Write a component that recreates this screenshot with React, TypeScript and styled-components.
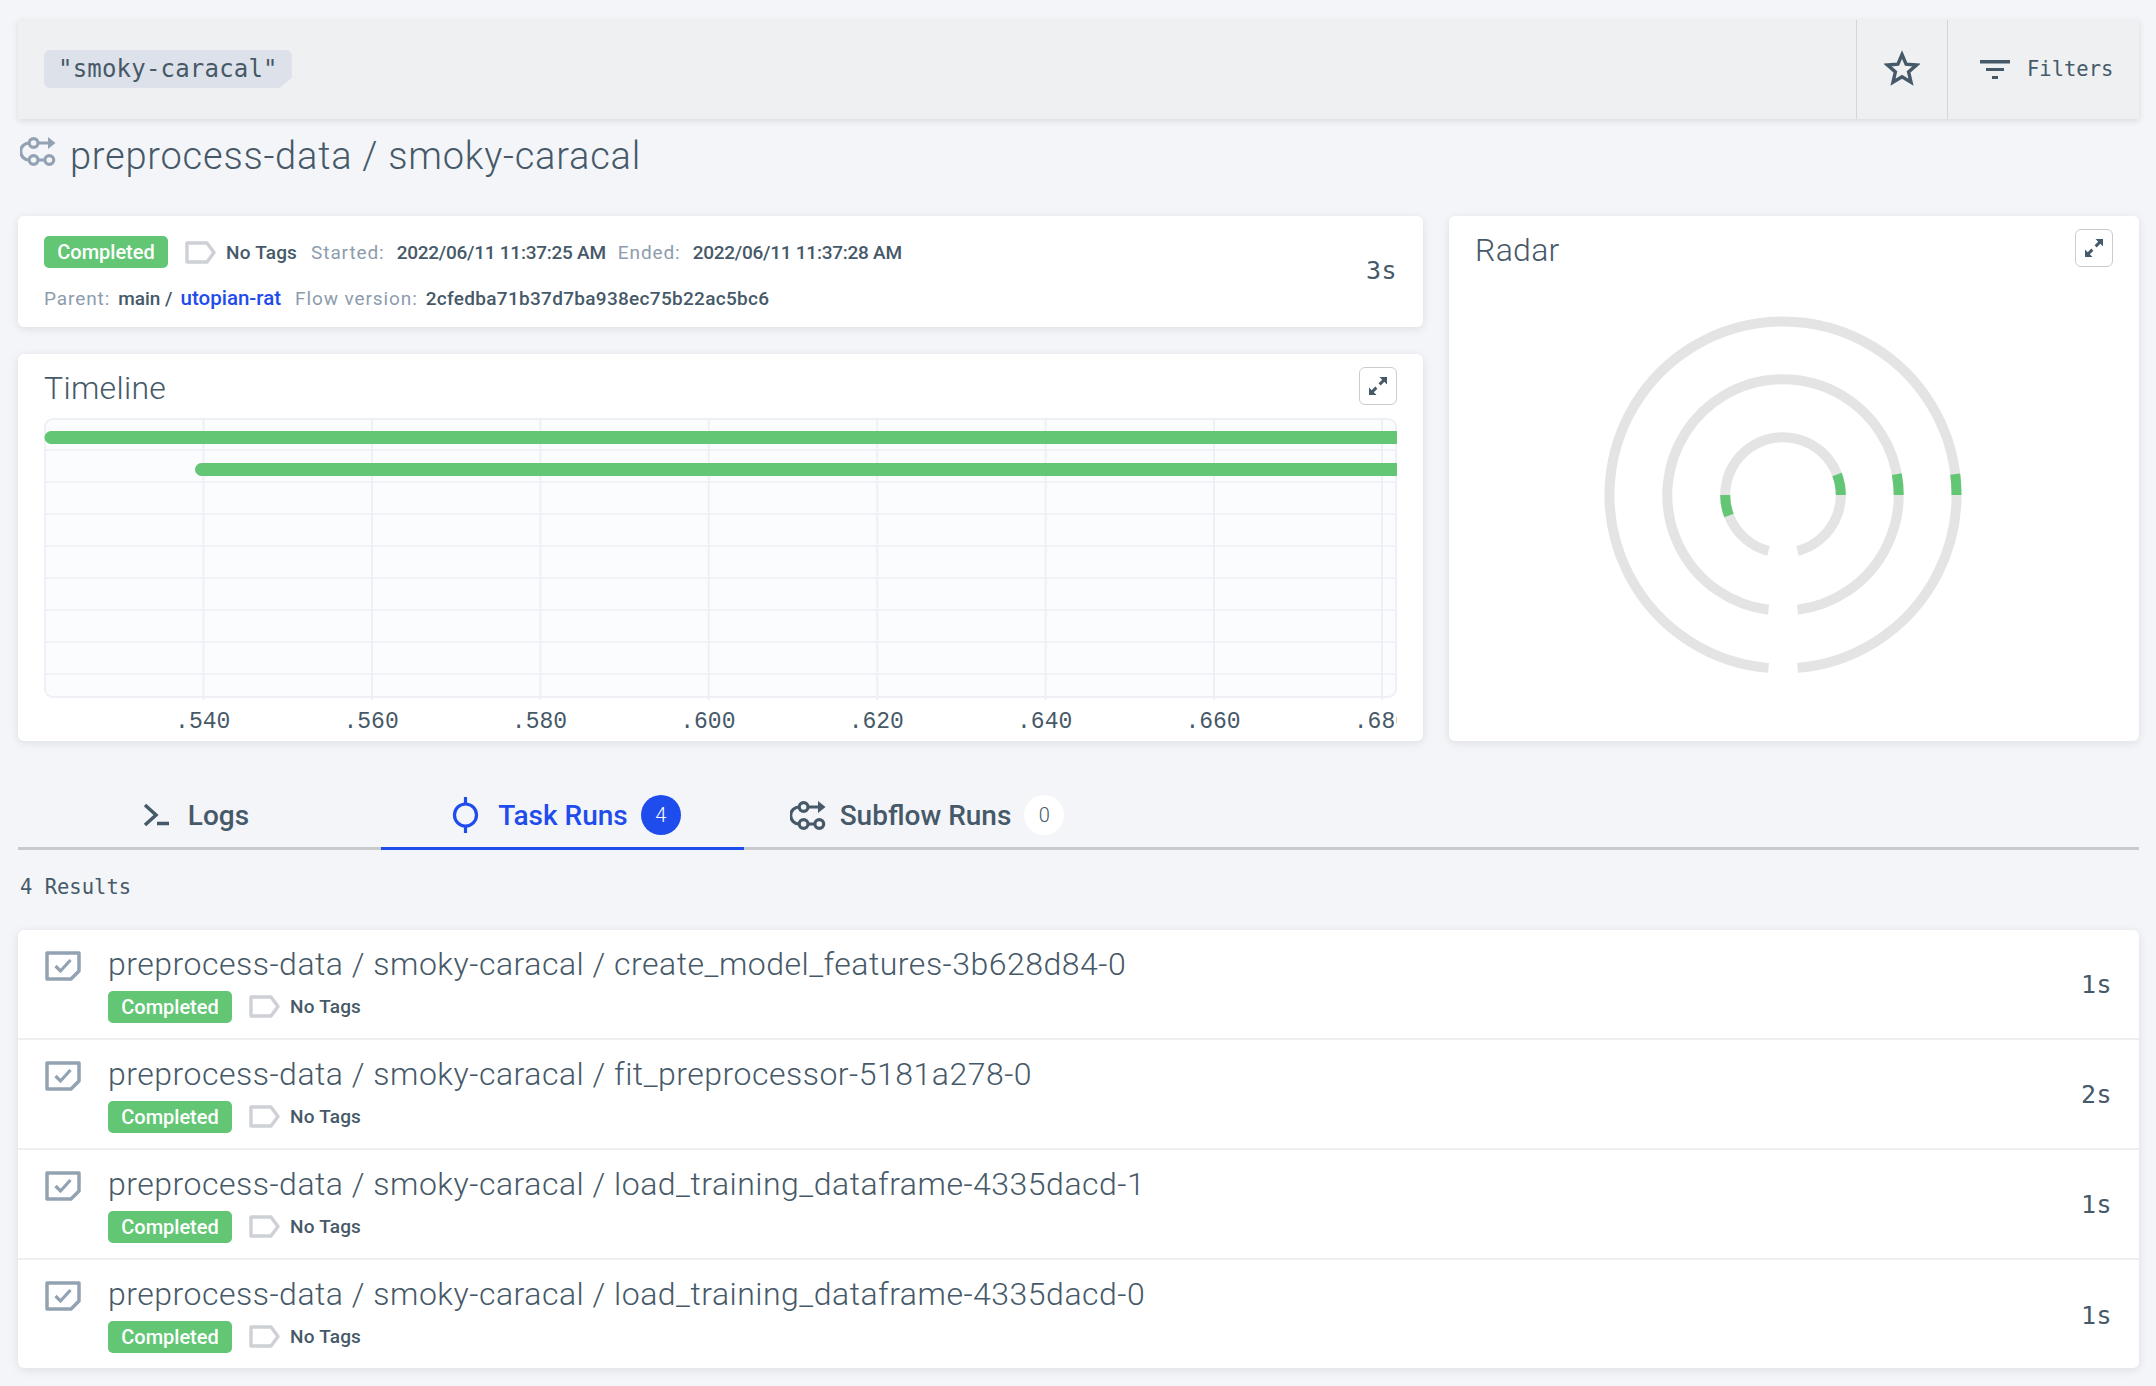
import { FC } from 'react';
import styled, { createGlobalStyle } from 'styled-components';

const GlobalStyle = createGlobalStyle`
  html, body {
    margin: 0;
    padding: 0;
    background: #f4f5f8;
    color: #465968;
    font-family: Roboto, "Liberation Sans", sans-serif;
  }
  * { box-sizing: border-box; }
`;

const TEXT = '#465968';
const GREEN = '#62c674';
const BLUE = '#1f4ced';
const MONO = '"DejaVu Sans Mono", monospace';

const TASK_RUNS = [
  { name: 'create_model_features-3b628d84-0', duration: '1s' },
  { name: 'fit_preprocessor-5181a278-0', duration: '2s' },
  { name: 'load_training_dataframe-4335dacd-1', duration: '1s' },
  { name: 'load_training_dataframe-4335dacd-0', duration: '1s' },
];

const TICKS = ['.540', '.560', '.580', '.600', '.620', '.640', '.660', '.680'];

const FlowIcon: FC<{ color: string }> = ({ color }) => (
  <svg width="36" height="29" viewBox="0 0 36 29" fill="none" stroke={color} strokeWidth="3.2">
    <circle cx="13.6" cy="6" r="4.4" />
    <circle cx="13.6" cy="23" r="4.4" />
    <circle cx="29.3" cy="23" r="4.4" />
    <path d="M18 6h11M18 23h7M9.2 6A8.5 8.5 0 0 0 9.2 23" />
    <path d="M28 0l7.5 6-7.5 6z" fill={color} stroke="none" />
  </svg>
);

const TerminalIcon: FC = () => (
  <svg width="27" height="24" viewBox="0 0 27 24" fill="none" stroke={TEXT} strokeWidth="3.5">
    <path d="M2 2l11 10L2 22M14 20.5h12" />
  </svg>
);

const TaskIcon: FC = () => (
  <svg width="27" height="36" viewBox="0 0 27 36" fill="none" stroke={BLUE} strokeWidth="3.2">
    <circle cx="13.5" cy="18" r="11" />
    <path d="M13.5 0v7M13.5 29v7" />
  </svg>
);

const StarIcon: FC = () => (
  <svg width="36" height="36" viewBox="0 0 36 36" fill="none" stroke={TEXT} strokeWidth="3.4">
    <path d="M18 4.5l4.1 9.6 10.4.9-7.9 6.9 2.4 10.2L18 26.7l-9 5.4 2.4-10.2-7.9-6.9 10.4-.9z" />
  </svg>
);

const FilterIcon: FC = () => (
  <svg width="30" height="20" viewBox="0 0 30 20" fill={TEXT}>
    <rect x="0" y="0" width="30" height="3.5" />
    <rect x="6" y="8" width="18" height="3" />
    <rect x="12" y="16" width="6" height="3" />
  </svg>
);

const ExpandIcon: FC = () => (
  <svg width="20" height="20" viewBox="0 0 20 20" fill={TEXT}>
    <path d="M11.5 1H19v7.5l-2.7-2.7-3.6 3.6-2.1-2.1 3.6-3.6zM8.5 19H1v-7.5l2.7 2.7 3.6-3.6 2.1 2.1-3.6 3.6z" />
  </svg>
);

const TagIcon: FC = () => (
  <svg width="31" height="23" viewBox="0 0 31 23" fill="none" stroke="#cdd0d5" strokeWidth="3.4" strokeLinejoin="round">
    <path d="M2 2h20l7 9.5-7 9.5H2z" />
  </svg>
);

const CheckIcon: FC = () => (
  <svg width="36" height="30" viewBox="0 0 36 30" fill="none" stroke="#93a2b3">
    <path d="M2 2h32v18l-8 8H2z" strokeWidth="3.5" strokeLinejoin="round" />
    <path d="M10.5 15l5 5 10-11" strokeWidth="3.2" />
  </svg>
);

// one ring of the radar, open at the bottom, with an arc helper for the green marks
const polar = (r: number, deg: number) => {
  const a = (deg * Math.PI) / 180;
  return `${(190 + r * Math.cos(a)).toFixed(2)} ${(190 - r * Math.sin(a)).toFixed(2)}`;
};
const arc = (r: number, from: number, to: number) =>
  `M${polar(r, from)}A${r} ${r} 0 ${to - from > 180 ? 1 : 0} 0 ${polar(r, to)}`;

const RING_RADII = [173.5, 115.7, 57.8];

const RadarChart: FC = () => (
  <svg width="380" height="380" viewBox="0 0 380 380" fill="none" strokeWidth="10">
    {RING_RADII.map((r) => {
      const gap = (Math.asin(14.5 / r) * 180) / Math.PI;
      return <path key={r} d={arc(r, -90 + gap, 270 - gap)} stroke="#e4e4e4" />;
    })}
    {RING_RADII.map((r) => (
      <path key={r} d={arc(r, 0, (21 / r) * (180 / Math.PI))} stroke={GREEN} />
    ))}
    <path d={arc(57.8, 180, 180 + (21 / 57.8) * (180 / Math.PI))} stroke={GREEN} />
  </svg>
);

const TimelinePlot: FC = () => {
  const rows = [32, 64, 96, 128, 160, 192, 224, 256];
  const cols = [159.5, 328, 496.4, 664.8, 833.2, 1001.6, 1170, 1338];
  return (
    <PlotSvg width="1353" height="282" viewBox="0 0 1353 282" fill="none">
      <rect x="1" y="1" width="1351" height="278" rx="8" fill="#fbfcfe" stroke="#eff0f5" strokeWidth="2" />
      {rows.map((y) => (
        <path key={y} d={`M1 ${y}H1352`} stroke="#f1f2f7" strokeWidth="2" />
      ))}
      {cols.map((x) => (
        <path key={x} d={`M${x} 1V282`} stroke="#eff0f5" strokeWidth="2" />
      ))}
      <path d="M7 13h1346v13H7a6.5 6.5 0 0 1 0-13z" fill={GREEN} />
      <path d="M157.5 45h1195.5v13H157.5a6.5 6.5 0 0 1 0-13z" fill={GREEN} />
    </PlotSvg>
  );
};

const App: FC = () => (
  <>
    <GlobalStyle />
    <Page>
      <FilterBar>
        <SearchArea>
          <QueryChip>"smoky-caracal"</QueryChip>
        </SearchArea>
        <StarCell>
          <StarIcon />
        </StarCell>
        <FiltersCell>
          <FilterIcon />
          <FiltersLabel>Filters</FiltersLabel>
        </FiltersCell>
      </FilterBar>

      <Heading>
        <FlowIcon color="#93a2b3" />
        <HeadingText>preprocess-data / smoky-caracal</HeadingText>
      </Heading>

      <Panels>
        <LeftColumn>
          <InfoCard>
            <InfoLines>
              <InfoLine>
                <StateBadge>Completed</StateBadge>
                <TagIcon />
                <TagLabel>No Tags</TagLabel>
                <MetaLabel>Started:</MetaLabel>
                <DateValue>2022/06/11 11:37:25 AM</DateValue>
                <MetaLabel>Ended:</MetaLabel>
                <DateValue>2022/06/11 11:37:28 AM</DateValue>
              </InfoLine>
              <InfoLine>
                <MetaLabel>Parent:</MetaLabel>
                <MetaValue>main /</MetaValue>
                <ParentLink>utopian-rat</ParentLink>
                <MetaLabel>Flow version:</MetaLabel>
                <HashValue>2cfedba71b37d7ba938ec75b22ac5bc6</HashValue>
              </InfoLine>
            </InfoLines>
            <CardDuration>3s</CardDuration>
          </InfoCard>

          <TimelineCard>
            <CardHeader>
              <CardTitle>Timeline</CardTitle>
              <ExpandButton>
                <ExpandIcon />
              </ExpandButton>
            </CardHeader>
            <TimelinePlot />
            <TickRow>
              {TICKS.map((t) => (
                <Tick key={t}>{t}</Tick>
              ))}
            </TickRow>
          </TimelineCard>
        </LeftColumn>

        <RadarCard>
          <CardHeader>
            <CardTitle>Radar</CardTitle>
            <ExpandButton>
              <ExpandIcon />
            </ExpandButton>
          </CardHeader>
          <RadarWrap>
            <RadarChart />
          </RadarWrap>
        </RadarCard>
      </Panels>

      <Tabs>
        <Tab $shift={-7}>
          <TerminalIcon />
          <TabLabel $indent={5}>Logs</TabLabel>
        </Tab>
        <Tab $active $shift={8}>
          <TaskIcon />
          <TabLabel $active $indent={6}>Task Runs</TabLabel>
          <CountBadge $active>4</CountBadge>
        </Tab>
        <Tab $shift={3}>
          <FlowIcon color={TEXT} />
          <TabLabel $indent={1}>Subflow Runs</TabLabel>
          <CountBadge>0</CountBadge>
        </Tab>
      </Tabs>

      <ResultCount>4 Results</ResultCount>

      <RunList>
        {TASK_RUNS.map((run) => (
          <RunRow key={run.name}>
            <CheckIcon />
            <RunBody>
              <RunTitle>preprocess-data / smoky-caracal / {run.name}</RunTitle>
              <RunMeta>
                <StateBadge>Completed</StateBadge>
                <TagIcon />
                <TagLabel>No Tags</TagLabel>
              </RunMeta>
            </RunBody>
            <RunDuration>{run.duration}</RunDuration>
          </RunRow>
        ))}
      </RunList>
    </Page>
  </>
);

const Page = styled.div`
  width: 2156px;
  height: 1386px;
  padding: 20px 17px 0 18px;
  overflow: hidden;
`;

const FilterBar = styled.div`
  display: flex;
  height: 99px;
  background: #eef0f2;
  box-shadow: 0 2px 6px rgba(70, 89, 104, 0.16);
`;

const SearchArea = styled.div`
  flex: 1;
  display: flex;
  align-items: center;
  padding: 0 26px;
`;

const QueryChip = styled.div`
  height: 38px;
  margin-top: -1px;
  padding: 0 14px;
  display: flex;
  align-items: center;
  background: #dde1e9;
  font-family: ${MONO};
  font-size: 24px;
  letter-spacing: 0.2px;
  color: ${TEXT};
  border-radius: 6px;
  clip-path: polygon(0 0, 100% 0, 100% 74%, 95% 100%, 0 100%);
`;

const StarCell = styled.div`
  width: 92px;
  display: flex;
  align-items: center;
  justify-content: center;
  padding-bottom: 3px;
  border-left: 1px solid #d3d5d8;
  border-right: 1px solid #d3d5d8;
`;

const FiltersCell = styled.div`
  width: 191px;
  display: flex;
  align-items: center;
  padding-left: 32px;
  gap: 17px;
`;

const FiltersLabel = styled.span`
  font-family: ${MONO};
  font-size: 20.5px;
  padding-bottom: 2px;
`;

const Heading = styled.div`
  height: 97px;
  display: flex;
  align-items: flex-start;
  padding: 18px 0 0 2px;
  gap: 14px;
`;

const HeadingText = styled.h1`
  margin: 0;
  font-size: 38px;
  line-height: 38px;
  font-weight: 300;
  letter-spacing: 0.77px;
  color: ${TEXT};
`;

const Panels = styled.div`
  display: grid;
  grid-template-columns: 1405px 690px;
  gap: 26px;
  height: 525px;
`;

const LeftColumn = styled.div`
  display: flex;
  flex-direction: column;
  gap: 27px;
`;

const Card = styled.div`
  background: #fff;
  border-radius: 6px;
  box-shadow: 0 2px 8px rgba(70, 89, 104, 0.14);
`;

const InfoCard = styled(Card)`
  height: 111px;
  padding: 0 26px;
  display: flex;
  align-items: center;
`;

const InfoLines = styled.div`
  flex: 1;
  display: flex;
  flex-direction: column;
  gap: 14px;
  padding-top: 7px;
`;

const InfoLine = styled.div`
  display: flex;
  align-items: center;
  gap: 12px;
  height: 32px;
`;

const StateBadge = styled.span`
  width: 124px;
  height: 32px;
  display: flex;
  align-items: center;
  justify-content: center;
  border-radius: 5px;
  background: ${GREEN};
  color: #fff;
  font-size: 20px;
  font-weight: 500;
  margin-right: 5px;
`;

const TagLabel = styled.span`
  font-size: 19px;
  font-weight: 500;
  letter-spacing: 0.2px;
  color: ${TEXT};
  margin: 0 2px 0 -2px;
`;

const MetaLabel = styled.span`
  font-size: 19px;
  letter-spacing: 0.9px;
  color: #8d9cad;
`;

const MetaValue = styled.span`
  font-size: 19px;
  font-weight: 500;
  color: ${TEXT};
  margin: 0 -4px;
`;

const DateValue = styled.span`
  font-size: 19px;
  font-weight: 500;
  letter-spacing: -0.25px;
  color: ${TEXT};
`;

const HashValue = styled.span`
  font-size: 19px;
  font-weight: 500;
  letter-spacing: 0.3px;
  color: ${TEXT};
  margin-left: -4px;
`;

const ParentLink = styled.span`
  font-size: 20.5px;
  font-weight: 500;
  color: ${BLUE};
  margin-right: 2px;
`;

const Duration = styled.span`
  font-family: ${MONO};
  font-size: 25px;
  letter-spacing: 0.5px;
  color: ${TEXT};
`;

const CardDuration = styled(Duration)`
  margin-top: -2px;
`;

const TimelineCard = styled(Card)`
  height: 387px;
  padding: 13px 26px 0;
`;

const CardHeader = styled.div`
  display: flex;
  align-items: center;
  justify-content: space-between;
  height: 38px;
`;

const CardTitle = styled.h2`
  margin: 0;
  padding-top: 4px;
  font-size: 32px;
  font-weight: 300;
  letter-spacing: 0.3px;
  color: ${TEXT};
`;

const ExpandButton = styled.div`
  width: 38px;
  height: 38px;
  display: flex;
  align-items: center;
  justify-content: center;
  border: 1px solid #c9ccd1;
  border-radius: 6px;
  background: #fff;
`;

const PlotSvg = styled.svg`
  display: block;
  margin-top: 13px;
`;

const TickRow = styled.div`
  display: flex;
  margin-top: 7px;
  padding-left: 74.5px;
  overflow: hidden;
`;

const Tick = styled.span`
  flex: 0 0 168.4px;
  text-align: center;
  font-family: "Liberation Mono", monospace;
  font-size: 23px;
  line-height: 30px;
  color: ${TEXT};
`;

const RadarCard = styled(Card)`
  padding: 13px 26px 0;
`;

const RadarWrap = styled.div`
  display: flex;
  justify-content: center;
  margin: 38px 0 0 -22px;
`;

const Tabs = styled.div`
  display: flex;
  height: 90px;
  margin-top: 19px;
  border-bottom: 3px solid #c9cacc;
`;

const Tab = styled.div<{ $active?: boolean; $shift: number }>`
  width: 363px;
  height: 90px;
  display: flex;
  align-items: center;
  justify-content: center;
  gap: 13px;
  padding: 23px ${(p) => (p.$shift < 0 ? -p.$shift : 0)}px 0 ${(p) => (p.$shift > 0 ? p.$shift : 0)}px;
  border-bottom: 3px solid ${(p) => (p.$active ? BLUE : 'transparent')};
`;

const TabLabel = styled.span<{ $active?: boolean; $indent: number }>`
  margin-left: ${(p) => p.$indent}px;
  font-size: 28px;
  font-weight: 500;
  color: ${(p) => (p.$active ? BLUE : TEXT)};
`;

const CountBadge = styled.span<{ $active?: boolean }>`
  width: 40px;
  height: 40px;
  border-radius: 50%;
  display: flex;
  align-items: center;
  justify-content: center;
  font-size: 20px;
  font-weight: 300;
  background: ${(p) => (p.$active ? BLUE : '#fff')};
  color: ${(p) => (p.$active ? '#fff' : TEXT)};
`;

const ResultCount = styled.div`
  height: 80px;
  padding: 25px 0 0 2px;
  font-family: ${MONO};
  font-size: 20.5px;
  color: ${TEXT};
`;

const RunList = styled(Card)`
  display: flex;
  flex-direction: column;
  height: 438px;
  overflow: hidden;
`;

const RunRow = styled.div`
  flex: 0 0 110px;
  display: flex;
  align-items: flex-start;
  padding: 18px 27px 0;
  gap: 27px;
  border-bottom: 2px solid #eceef0;
  &:last-child { border-bottom: none; }
  > svg { margin-top: 3px; }
`;

const RunDuration = styled(Duration)`
  align-self: center;
  margin-top: -18px;
`;

const RunBody = styled.div`
  flex: 1;
  display: flex;
  flex-direction: column;
  gap: 10.5px;
`;

const RunTitle = styled.div`
  font-size: 32px;
  line-height: 32px;
  font-weight: 300;
  letter-spacing: 0.5px;
  color: ${TEXT};
`;

const RunMeta = styled.div`
  display: flex;
  align-items: center;
  gap: 12px;
`;

export default App;
